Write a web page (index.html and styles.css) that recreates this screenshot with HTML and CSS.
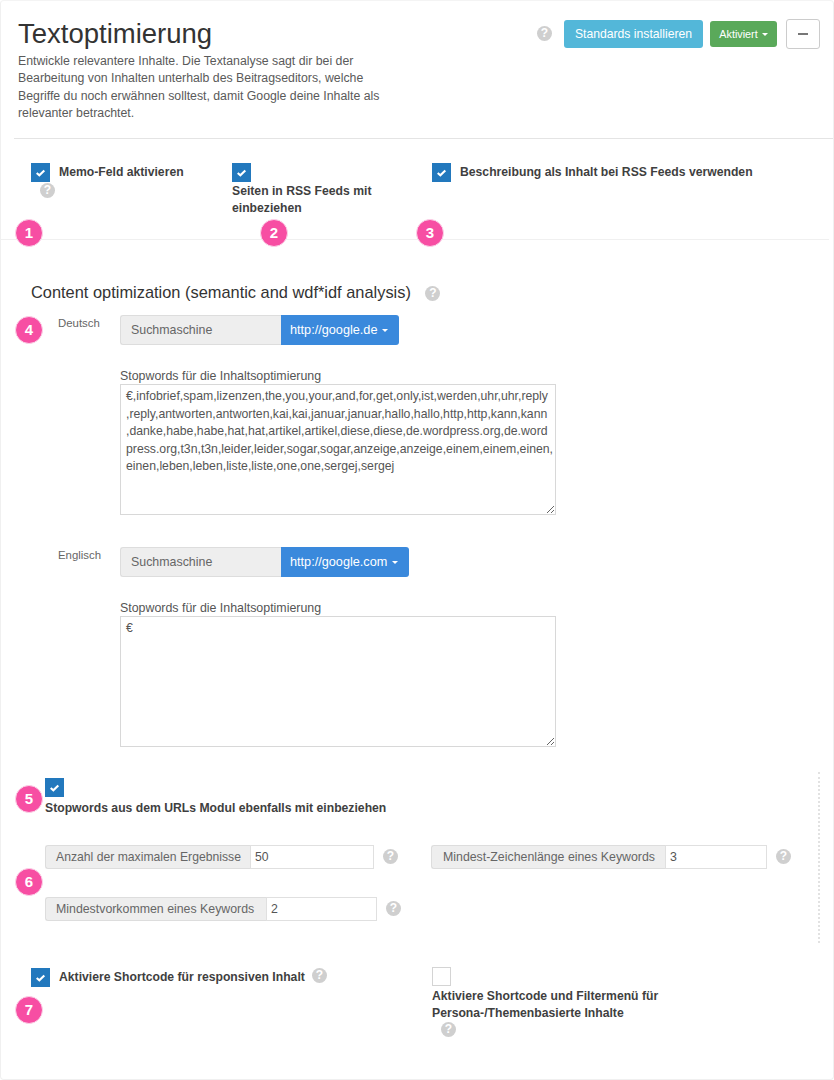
FILE: index.html
```html
<!DOCTYPE html>
<html>

<head>
    <title>Textoptimierung</title>
    <meta charset="utf-8">
    <meta name="viewport" content="width=device-width, initial-scale=1.0">
    <link rel="stylesheet" href="styles.css">
</head>

<body>
    <div class="panel">
        <div class="head">
            <div class="head-text">
                <h1>Textoptimierung</h1>
                <p>Entwickle relevantere Inhalte. Die Textanalyse sagt dir bei der Bearbeitung von Inhalten unterhalb des Beitragseditors, welche Begriffe du noch erwähnen solltest, damit Google deine Inhalte als relevanter betrachtet.</p>
            </div>
            <div class="head-actions">
                <span class="help help-head">?</span>
                <button class="btn btn-info">Standards installieren</button>
                <button class="btn btn-success">Aktiviert <i class="caret"></i></button>
                <button class="btn btn-min"><i class="minus"></i></button>
            </div>
        </div>

        <div class="options">
            <div class="opt opt-1">
                <div class="opt-line">
                    <span class="check on"><svg viewBox="0 0 20 20"><polyline points="6,10.5 8.8,13 14,7.8"></polyline></svg></span>
                    <b>Memo-Feld aktivieren</b>
                </div>
                <span class="help help-memo">?</span>
            </div>
            <div class="opt opt-2">
                <span class="check on"><svg viewBox="0 0 20 20"><polyline points="6,10.5 8.8,13 14,7.8"></polyline></svg></span>
                <b class="opt-under">Seiten in RSS Feeds mit einbeziehen</b>
            </div>
            <div class="opt opt-3">
                <div class="opt-line">
                    <span class="check on"><svg viewBox="0 0 20 20"><polyline points="6,10.5 8.8,13 14,7.8"></polyline></svg></span>
                    <b>Beschreibung als Inhalt bei RSS Feeds verwenden</b>
                </div>
            </div>
            <span class="badge b1">1</span>
            <span class="badge b2">2</span>
            <span class="badge b3">3</span>
        </div>

        <div class="content">
            <h2>Content optimization (semantic and wdf*idf analysis) <span class="help help-h2">?</span></h2>

            <div class="lang lang-de">
                <span class="lang-name">Deutsch</span>
                <div class="lang-body">
                    <div class="engine">
                        <span class="engine-label">Suchmaschine</span>
                        <button class="engine-btn">http://google.de <i class="caret"></i></button>
                    </div>
                    <label class="stop-label">Stopwords für die Inhaltsoptimierung</label>
                    <textarea class="stop-text" spellcheck="false">€,infobrief,spam,lizenzen,the,you,your,and,for,get,only,ist,werden,uhr,uhr,reply
,reply,antworten,antworten,kai,kai,januar,januar,hallo,hallo,http,http,kann,kann
,danke,habe,habe,hat,hat,artikel,artikel,diese,diese,de.wordpress.org,de.word
press.org,t3n,t3n,leider,leider,sogar,sogar,anzeige,anzeige,einem,einem,einen,
einen,leben,leben,liste,liste,one,one,sergej,sergej</textarea>
                </div>
            </div>

            <div class="lang lang-en">
                <span class="lang-name">Englisch</span>
                <div class="lang-body">
                    <div class="engine">
                        <span class="engine-label">Suchmaschine</span>
                        <button class="engine-btn">http://google.com <i class="caret"></i></button>
                    </div>
                    <label class="stop-label">Stopwords für die Inhaltsoptimierung</label>
                    <textarea class="stop-text" spellcheck="false">€</textarea>
                </div>
            </div>
            <span class="badge b4">4</span>
        </div>

        <div class="limits">
            <span class="check on"><svg viewBox="0 0 20 20"><polyline points="6,10.5 8.8,13 14,7.8"></polyline></svg></span>
            <b class="limits-title">Stopwords aus dem URLs Modul ebenfalls mit einbeziehen</b>

            <div class="limit-grid">
                <div class="limit-cell">
                    <div class="field field-a">
                        <span class="field-label">Anzahl der maximalen Ergebnisse</span>
                        <span class="field-value">50</span>
                    </div>
                    <span class="help">?</span>
                </div>
                <div class="limit-cell">
                    <div class="field field-b">
                        <span class="field-label">Mindest-Zeichenlänge eines Keywords</span>
                        <span class="field-value">3</span>
                    </div>
                    <span class="help">?</span>
                </div>
                <div class="limit-cell">
                    <div class="field field-c">
                        <span class="field-label">Mindestvorkommen eines Keywords</span>
                        <span class="field-value">2</span>
                    </div>
                    <span class="help">?</span>
                </div>
            </div>
            <span class="badge b5">5</span>
            <span class="badge b6">6</span>
        </div>

        <div class="shortcodes">
            <div class="short-left">
                <span class="check on"><svg viewBox="0 0 20 20"><polyline points="6,10.5 8.8,13 14,7.8"></polyline></svg></span>
                <b>Aktiviere Shortcode für responsiven Inhalt</b>
                <span class="help help-short">?</span>
            </div>
            <div class="short-right">
                <span class="check"></span>
                <b class="opt-under">Aktiviere Shortcode und Filtermenü für Persona-/Themenbasierte Inhalte</b>
                <span class="help help-persona">?</span>
            </div>
            <span class="badge b7">7</span>
        </div>
    </div>
</body>

</html>
```

FILE: styles.css
```css
* {
    box-sizing: border-box;
}

body {
    margin: 0;
    background-color: #fff;
    font-family: "Liberation Sans", Arial, sans-serif;
    font-size: 13px;
    color: #555;
}

.panel {
    width: 834px;
    height: 1080px;
    border: 1px solid #f0f0f0;
    border-top-color: #f4f4f4;
    border-radius: 4px;
    overflow: hidden;
}

/* header */
.head {
    display: flex;
    justify-content: space-between;
    height: 138px;
    margin-left: 13px;
    padding: 18px 13px 0 4px;
    border-bottom: 1px solid #e4e4e4;
}

.head-text {
    width: 372px;
}

h1 {
    margin: 0 0 4px;
    font-size: 27.5px;
    line-height: 30px;
    font-weight: 400;
    color: #333;
}

.head-text p {
    margin: 0;
    font-size: 12.3px;
    line-height: 17.4px;
    color: #5a5a5a;
}

.head-actions {
    display: flex;
    align-items: flex-start;
}

.btn {
    font-family: inherit;
    border: 0;
    border-radius: 3px;
    color: #fff;
    padding: 0;
}

.btn-info {
    width: 139px;
    height: 28px;
    margin: 1px 7px 0 12px;
    font-size: 12.2px;
    background-color: #53b7d9;
}

.btn-success {
    width: 67px;
    height: 26px;
    margin: 2px 9px 0 0;
    font-size: 10.8px;
    background-color: #5aa95a;
}

.btn-min {
    width: 34px;
    height: 30px;
    background-color: #fff;
    border: 1px solid #ccc;
    display: flex;
    align-items: center;
    justify-content: center;
}

.minus {
    width: 10px;
    height: 2px;
    background-color: #777;
}

.caret {
    display: inline-block;
    width: 0;
    height: 0;
    margin-left: 1px;
    vertical-align: 2px;
    border-top: 3px solid #fff;
    border-left: 3px solid transparent;
    border-right: 3px solid transparent;
}

.help {
    display: inline-block;
    flex: none;
    width: 15px;
    height: 15px;
    border-radius: 50%;
    background-color: #cfcfcf;
    color: #fff;
    font-size: 12px;
    line-height: 15px;
    font-weight: 700;
    text-align: center;
}

.help-head {
    margin-top: 7px;
}

/* option rows */
.check {
    display: block;
    flex: none;
    width: 19px;
    height: 19px;
    border: 1px solid #d4d4d4;
    background-color: #fff;
}

.check.on {
    border: 0;
    background-color: #2278bd;
}

.check svg {
    display: block;
    width: 19px;
    height: 19px;
}

.check polyline {
    fill: none;
    stroke: #fff;
    stroke-width: 2.2;
}

b {
    font-size: 12.2px;
    line-height: 17.4px;
    font-weight: 700;
    color: #3f3f3f;
}

.options {
    position: relative;
    display: flex;
    height: 101px;
    padding-top: 24px;
    margin-right: 4px;
    border-bottom: 1px solid #f0f0f0;
}

.opt-line {
    display: flex;
    gap: 9px;
}

.opt-line b {
    padding-top: 1px;
}

.opt-1 {
    width: 201px;
    margin-left: 30px;
}

.opt-2 {
    width: 200px;
}

.opt-under {
    display: block;
    margin-top: 1px;
    width: 165px;
}

.help-memo {
    margin: 1px 0 0 9px;
    display: block;
}

.badge {
    position: absolute;
    width: 28px;
    height: 28px;
    border-radius: 50%;
    background-color: #f74ea3;
    border: 1px solid #fbd3e8;
    color: #fff;
    font-size: 15px;
    line-height: 26px;
    font-weight: 700;
    text-align: center;
}

.b1 {
    left: 14px;
    top: 80px;
}

.b2 {
    left: 259px;
    top: 80px;
}

.b3 {
    left: 415px;
    top: 80px;
}

/* language blocks */
.content {
    position: relative;
    padding-top: 42px;
    height: 532px;
}

h2 {
    margin: 0 0 13px 30px;
    font-size: 16.4px;
    line-height: 20px;
    font-weight: 400;
    color: #333;
}

.help-h2 {
    margin-left: 10px;
    vertical-align: 1px;
}

.lang {
    display: flex;
}

.lang-de {
    margin-bottom: 32px;
}

.lang-name {
    width: 119px;
    padding: 1px 0 0 57px;
    font-size: 11.4px;
    line-height: 14px;
    color: #666;
}

.engine {
    display: flex;
    height: 30px;
}

.engine-label {
    width: 161px;
    padding-left: 10px;
    border: 1px solid #ddd;
    border-right: 0;
    border-radius: 3px 0 0 3px;
    background-color: #eee;
    font-size: 12.4px;
    line-height: 28px;
    color: #666;
}

.engine-btn {
    padding: 0 11px 0 9px;
    border: 0;
    border-radius: 0 3px 3px 0;
    background-color: #3a89dc;
    color: #fff;
    font-family: inherit;
    font-size: 12.7px;
}

.stop-label {
    display: block;
    margin-top: 23px;
    font-size: 12.4px;
    line-height: 16px;
    color: #555;
}

.stop-text {
    display: block;
    width: 436px;
    height: 131px;
    padding: 3px 6px 0 5px;
    border: 1px solid #d8d8d8;
    font-family: inherit;
    font-size: 12.25px;
    line-height: 17.5px;
    color: #555;
    white-space: pre;
    overflow: hidden;
}

.b4 {
    left: 14px;
    top: 76px;
}

/* stopwords and limits */
.limits {
    position: relative;
    height: 171px;
    margin: 0 13px 19px 0;
    padding: 6px 0 0 44px;
    border-right: 2px dotted #e2e2e2;
}

.limits-title {
    display: block;
    margin-top: 3px;
}

.limit-grid {
    display: grid;
    grid-template-columns: 386px auto;
    row-gap: 28px;
    margin-top: 28px;
}

.limit-cell {
    display: flex;
    align-items: flex-start;
    gap: 9px;
}

.limit-cell .help {
    margin-top: 4px;
}

.field {
    display: flex;
    height: 24px;
    font-size: 12.2px;
    line-height: 22px;
}

.field-label {
    padding-left: 10px;
    border: 1px solid #ddd;
    border-right: 0;
    border-radius: 3px 0 0 3px;
    background-color: #eee;
    color: #666;
    white-space: nowrap;
}

.field-value {
    flex: 1;
    padding-left: 4px;
    border: 1px solid #e0e0e0;
    color: #555;
}

.field-a {
    width: 329px;
}

.field-a .field-label {
    width: 205px;
}

.field-b {
    width: 336px;
    font-size: 12.35px;
}

.field-b .field-label {
    width: 234px;
    padding-left: 11px;
}

.field-c {
    width: 332px;
    font-size: 12.35px;
}

.field-c .field-label {
    width: 221px;
}

.b5 {
    left: 14px;
    top: 13px;
}

.b6 {
    left: 14px;
    top: 96px;
}

/* shortcodes */
.shortcodes {
    position: relative;
    display: flex;
    padding-top: 6px;
}

.short-left {
    display: flex;
    align-items: flex-start;
    width: 401px;
    margin-left: 30px;
    gap: 9px;
}

.short-left b {
    padding-top: 1px;
    white-space: nowrap;
}

.help-short {
    margin-left: -2px;
}

.short-right {
    margin-top: -1px;
}

.short-right .opt-under {
    margin-top: 2px;
    width: 260px;
}

.help-persona {
    display: block;
    margin: -1px 0 0 9px;
}

.b7 {
    left: 14px;
    top: 34px;
}
```
